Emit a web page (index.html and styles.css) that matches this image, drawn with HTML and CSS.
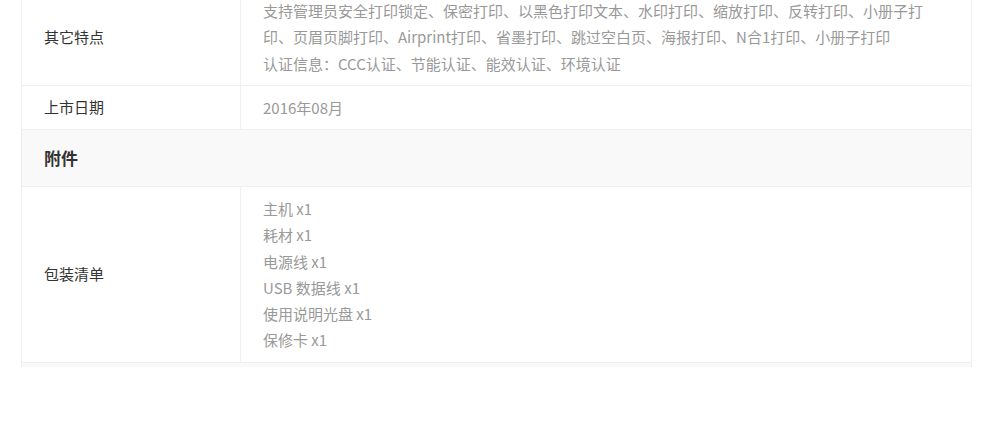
FILE: index.html
```html
<!DOCTYPE html>
<html lang="zh-CN">

<head>
  <meta charset="UTF-8">
  <meta name="viewport" content="width=device-width, initial-scale=1.0">
  <title>规格参数</title>
  <link rel="stylesheet" href="styles.css">
</head>

<body>

  <div class="view">
    <div class="spec">
      <div class="row">
        <div class="label">其它特点</div>
        <div class="value">
          <p>支持管理员安全打印锁定、保密打印、以黑色打印文本、水印打印、缩放打印、反转打印、小册子打印、页眉页脚打印、Airprint打印、省墨打印、跳过空白页、海报打印、N合1打印、小册子打印</p>
          <p>认证信息：CCC认证、节能认证、能效认证、环境认证</p>
        </div>
      </div>
      <div class="row">
        <div class="label">上市日期</div>
        <div class="value">2016年08月</div>
      </div>

      <div class="group">附件</div>
      <div class="row">
        <div class="label">包装清单</div>
        <div class="value">
          <ul>
            <li>主机 x1</li>
            <li>耗材 x1</li>
            <li>电源线 x1</li>
            <li>USB 数据线 x1</li>
            <li>使用说明光盘 x1</li>
            <li>保修卡 x1</li>
          </ul>
        </div>
      </div>

      <!-- 下一组的标题，只露出顶上一点 -->
      <div class="group"></div>
    </div>
  </div>

</body>

</html>
```

FILE: styles.css
```css
* {
  margin: 0;
  padding: 0;
}

body {
  background: #fff;
  font-family: "Microsoft YaHei", "Noto Sans CJK SC", sans-serif;
  font-size: 15px;
  color: #333;
}

/* 页面滚动到这里，只露出 367px */
.view {
  height: 367px;
  overflow: hidden;
}

.spec {
  width: 949px;
  margin: -11px 0 0 21px;
  border-left: 1px solid #eee;
  border-right: 1px solid #eee;
}

.row {
  display: grid;
  grid-template-columns: 219px 1fr;
  border-bottom: 1px solid #f0f0f0;
}

.label {
  display: flex;
  align-items: center;
  padding-left: 22px;
  border-right: 1px solid #f0f0f0;
  line-height: 1.75;
}

.value {
  padding: 9px 40px 8px 22px;
  line-height: 1.75;
  color: #999;
}

ul {
  list-style: none;
}

.group {
  height: 56px;
  line-height: 56px;
  padding-left: 22px;
  background-color: #f9f9f9;
  font-size: 17px;
  font-weight: bold;
  color: #333;
  border-bottom: 1px solid #f0f0f0;
}
```
